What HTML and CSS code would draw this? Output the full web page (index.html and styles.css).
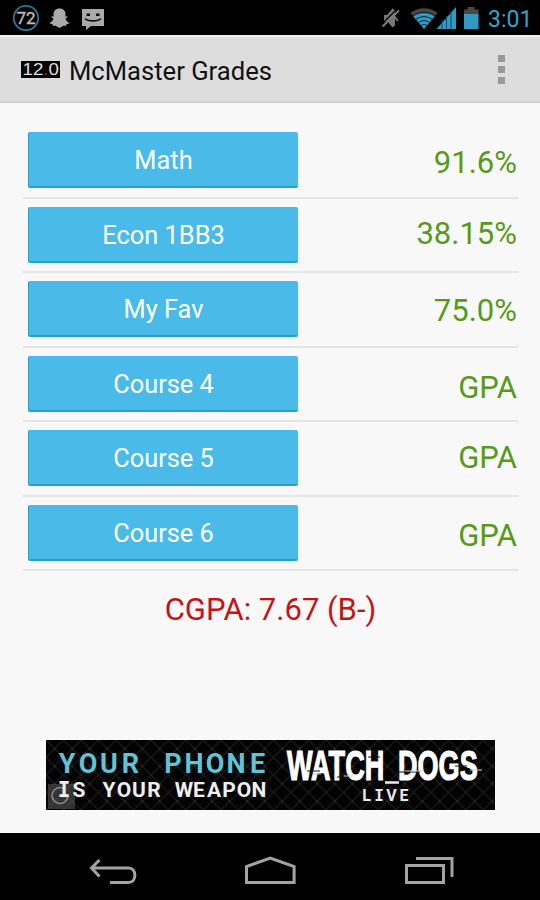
FILE: index.html
```html
<!DOCTYPE html>
<html lang="en">
<head>
  <meta charset="UTF-8" />
  <meta name="viewport" content="width=device-width, initial-scale=1.0"/>
  <title>McMaster Grades</title>
  <link rel="stylesheet" href="styles.css">
</head>
<body>
  <div class="status-bar">
    <svg class="status-left" width="120" height="35" viewBox="0 0 120 35">
      <circle cx="26" cy="18" r="12.2" fill="none" stroke="#277a9c" stroke-width="1.8"/>
      <text class="battery-num" x="26" y="24" text-anchor="middle">72</text>
      <path fill="#aaa" d="M59.500 8.500c-4 0-6 2.500-6 5.500l.2 2.500-2.200-.2c-.5.900 1 1.700 2 2.100-.6 2-2 3.600-4 4.400.2 1 2 1.300 3 1.500l.5 1.500h2.500c1.400.3 2.200 2 4 2s2.600-1.700 4-2h2.500l.5-1.500c1-.2 2.800-.5 3-1.500-2-.8-3.400-2.400-4-4.400 1-.4 2.500-1.200 2-2.100l-2.200.2.200-2.500c0-3-2-5.500-6-5.500z"/>
      <path fill="#aaa" d="M82 9h22v17H91l-5 4v-4h-4z"/>
      <path fill="none" stroke="#111" stroke-width="1.7" d="M85 18.500c3 3.200 13 3.200 16 0"/>
      <path fill="#111" d="M86.500 13.500h3.500v2.500h-3.500zM96 13.500h3.500v2.500H96z"/>
    </svg>
    <div class="status-right">
      <svg width="105" height="35" viewBox="380 0 105 35">
        <path fill="#777" d="M384 15h3l5.500-6.500 2.500 2v15l-2.500 2-4.500-5.500h-4z"/>
        <path fill="none" stroke="#000" stroke-width="1.200" d="M381.500 24.500l15-15"/>
        <path fill="none" stroke="#7c7c7c" stroke-width="1.800" d="M382.500 26.500l16.500-16M394 16l4 5"/>
        <path fill="#484848" d="M424 29L410.500 13c7-6.500 20-6.500 27 0z"/>
        <path fill="#309bc2" d="M424 29L413.500 16.500c5-4.500 16-4.500 21 0z"/>
        <path fill="none" stroke="#071e28" stroke-width="1" d="M413 15.800c6-4.700 16-4.700 22 0M416 19.300c5-3.500 11-3.500 16 0M418.500 22.500c3.500-2.500 7.500-2.500 11 0M421 25.500c2-1.300 4-1.300 6 0"/>
        <path fill="#309bc2" d="M436.500 29L456 7v22z"/>
        <path fill="none" stroke="#0f4a62" stroke-width="1" d="M442 20v9M446.500 16v13M451 11v18"/>
        <path fill="#484848" d="M464 9.500h3.500V7h7v2.500h4V14H464z"/>
        <path fill="#309bc2" d="M464 14h14.500v15H464z"/>
      </svg>
      <span class="clock">3:01</span>
    </div>
  </div>

  <div class="action-bar">
    <svg class="app-icon" width="39" height="17" viewBox="0 0 39 17">
      <rect width="39" height="17" fill="#050505"/>
      <text class="icon-num" transform="translate(1.500 14) scale(1.170 1)">12<tspan class="dot">.</tspan>0</text>
    </svg>
    <h1>McMaster Grades</h1>
    <div class="overflow"><i></i><i></i><i></i></div>
  </div>

  <div class="content">
    <div class="course">
      <button>Math</button>
      <span class="grade grade-1">91.6%</span>
    </div>
    <div class="course">
      <button>Econ 1BB3</button>
      <span class="grade grade-2">38.15%</span>
    </div>
    <div class="course">
      <button>My Fav</button>
      <span class="grade grade-3">75.0%</span>
    </div>
    <div class="course">
      <button>Course 4</button>
      <span class="grade grade-4">GPA</span>
    </div>
    <div class="course">
      <button>Course 5</button>
      <span class="grade grade-5">GPA</span>
    </div>
    <div class="course">
      <button>Course 6</button>
      <span class="grade grade-6">GPA</span>
    </div>

    <div class="cgpa">CGPA: 7.67 (B-)</div>

    <svg class="ad" width="449" height="70" viewBox="0 0 449 70">
      <defs>
        <pattern id="fence" width="17.500" height="17.500" patternUnits="userSpaceOnUse">
          <path d="M0 0l17.500 17.500M17.500 0L0 17.500" stroke="#1d1d1d" stroke-width="1.200"/>
          <circle cx="8.750" cy="8.750" r="1" fill="#303030"/>
        </pattern>
      </defs>
      <rect width="449" height="70" fill="#030303"/>
      <rect width="449" height="70" fill="url(#fence)"/>
      <rect x="2" y="44" width="27" height="25" fill="#555" opacity=".6"/>
      <path fill="none" stroke="#888" stroke-width="1.600" d="M18 48.500a8 8 0 1 0 4 8h-6"/>
      <text class="ad-phone" y="33" x="21 42 63 84.500 105.500 127 148 169 190 211.500">YOUR PHONE</text>
      <text class="ad-weapon" y="57" x="18 33 48 63 78 93 108 123 138 153 168 183 198 213"><tspan class="slab">I</tspan>S YOUR WEAPON</text>
      <text class="ad-logo" transform="translate(241 39.500) scale(.645 1)">WATCH</text>
      <path d="M339 42.500h14" stroke="#eee" stroke-width="2.500"/>
      <text class="ad-logo" transform="translate(352 39.500) scale(.645 1)">DOGS</text>
      <path d="M261 31h13M291 37h12M352 32h22M409 26h12M322 17h12M432 30h8" stroke="#111" stroke-width="1"/>
      <path d="M267 34h8M298 36h9M359 31h17M424 30h12" stroke="#ccc" stroke-width="1"/>
      <text class="ad-live" y="61" x="320.500 333 345.500 358">L<tspan class="slab">I</tspan>VE</text>
    </svg>
  </div>

  <div class="nav-bar">
    <svg width="540" height="67" viewBox="0 833 540 67" fill="none" stroke="#a3a3a3" stroke-width="3">
      <path d="M110 882.500h18.500c8.500 0 8.500-14.500 0-14.500H91.500M99.500 860l-8 8 8 8.500"/>
      <path d="M246.500 882.500v-16l23.800-8.500 23.800 8.500v16z"/>
      <path d="M406.500 865.500h37v17h-37zM416 858.500h36v18.500"/>
    </svg>
  </div>
</body>
</html>
```
FILE: styles.css
```css
body {
  font-family: Roboto, sans-serif;
  background: #f8f8f8;
  margin: 0;
  height: 900px;
  display: flex;
  flex-direction: column;
  overflow: hidden;
}

svg {
  display: block;
}

.status-bar {
  height: 35px;
  background: #000;
  display: flex;
  justify-content: space-between;
}

.status-right {
  display: flex;
  align-items: center;
  padding-right: 10px;
}

.clock {
  color: #33a5d0;
  font-size: 23px;
  line-height: 35px;
  width: 42px;
  margin-left: 3px;
  padding-top: 3px;
  white-space: nowrap;
}

.battery-num {
  font: 17px Roboto, sans-serif;
  fill: #bbb;
  stroke: #bbb;
  stroke-width: .4;
}

.action-bar {
  box-sizing: border-box;
  height: 68px;
  background: #ddd;
  border-top: 2px solid #f0f0f0;
  border-bottom: 2px solid #cfcfcf;
  display: flex;
  align-items: center;
  padding: 1px 35px 0 21px;
}

.icon-num {
  font: 16px "Liberation Sans", sans-serif;
  fill: #ddd;
}

.dot {
  fill: #a22;
}

h1 {
  margin: 2px 0 0 9px;
  flex: 1;
  font-size: 25.6px;
  font-weight: normal;
  color: #111;
}

.overflow {
  display: grid;
  gap: 4px;
}

.overflow i {
  width: 7px;
  height: 7px;
  background: #999;
}

.content {
  flex: 1;
  padding: 21px 22px 0 23px;
}

.course {
  box-sizing: border-box;
  height: 74.5px;
  padding: 8px 1px 0 5px;
  border-bottom: 2.5px solid #e5e5e5;
  display: flex;
  justify-content: space-between;
  align-items: flex-start;
}

button {
  width: 270px;
  height: 56px;
  padding: 2px 0 0;
  border: solid #22a3cf;
  border-width: 0 0 2px 1px;
  border-radius: 2px;
  background: #4abae8;
  color: #fff;
  font-family: Roboto, sans-serif;
  font-size: 25.4px;
}

.grade {
  color: #559a18;
  font-size: 31px;
  line-height: 36px;
}

.grade-1 { margin-top: 13px; }
.grade-2 { margin-top: 9px; }
.grade-3 { margin-top: 12px; }
.grade-4 { margin-top: 14px; }
.grade-5 { margin-top: 10px; }
.grade-6 { margin-top: 13px; }

.cgpa {
  margin-top: 21px;
  text-align: center;
  font-size: 31px;
  line-height: 36px;
  color: #c51414;
}

.ad {
  margin: 112px 0 0 23px;
}

.ad-phone,
.ad-weapon,
.ad-live {
  font-family: Roboto, sans-serif;
  font-weight: bold;
  text-anchor: middle;
}

.ad-phone {
  font-size: 27px;
  fill: #61c3d5;
}

.ad-weapon {
  font-size: 21px;
  fill: #eee;
}

.ad-logo {
  font: bold 42px "Liberation Sans", sans-serif;
  fill: #fff;
  stroke: #fff;
  stroke-width: 1.2;
}

.ad-live {
  font-size: 16px;
  fill: #e8e8e8;
}

.slab {
  font-family: "DejaVu Sans Mono", monospace;
}

.nav-bar {
  height: 67px;
  background: #000;
}
```
